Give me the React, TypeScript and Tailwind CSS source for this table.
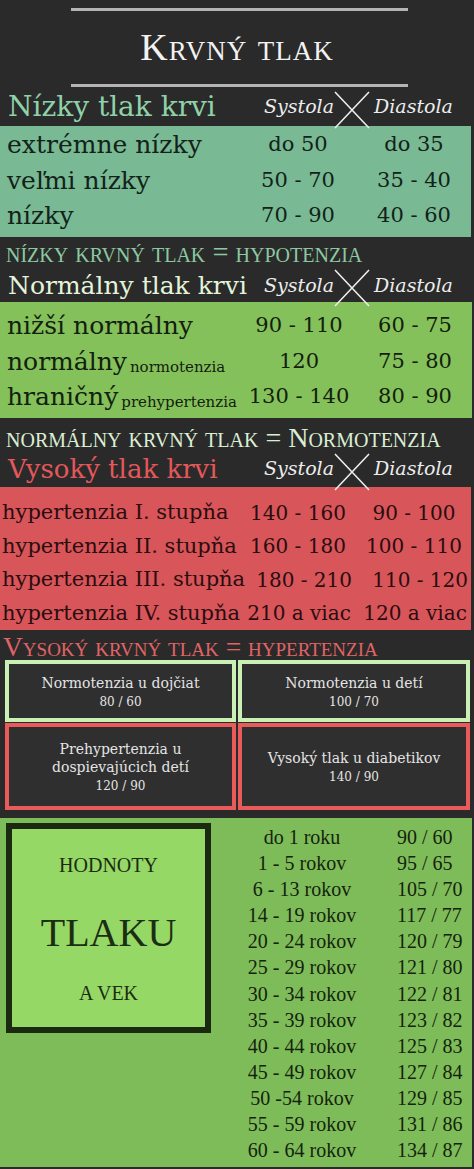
const slab = "font-['DejaVu_Serif',serif]";
const times = "font-['Liberation_Serif',serif]";

function Cross() {
  return (
    <svg width="36" height="38" viewBox="0 0 36 38" className="relative z-10 mt-[6px] shrink-0 overflow-visible">
      <path d="M1 1 L35 37 M35 1 L1 37" stroke="#ededed" strokeWidth="1.6" fill="none" />
    </svg>
  );
}

function Head({ title, tone }: { title: string; tone: string }) {
  return (
    <div className="flex h-full items-center">
      <div className={`w-[262px] whitespace-nowrap pl-[8px] leading-none ${slab} ${tone}`}>{title}</div>
      <div className={`w-[72px] text-right text-[19px] italic leading-none text-[#ececec] ${slab}`}>Systola</div>
      <Cross />
      <div className={`pl-[4px] text-[19px] italic leading-none text-[#ececec] ${slab}`}>Diastola</div>
    </div>
  );
}

type Row = { label: React.ReactNode; a: string; b: string };

const low: Row[] = [
  { label: "extrémne nízky", a: "do 50", b: "do 35" },
  { label: "veľmi nízky", a: "50 - 70", b: "35 - 40" },
  { label: "nízky", a: "70 - 90", b: "40 - 60" },
];

const normal: Row[] = [
  { label: "nižší normálny", a: "90 - 110", b: "60 - 75" },
  {
    label: (
      <>
        normálny<span className="relative top-[2px] ml-[3px] text-[15px]">normotenzia</span>
      </>
    ),
    a: "120",
    b: "75 - 80",
  },
  {
    label: (
      <>
        hraničný<span className="relative top-[2px] ml-[3px] text-[15px]">prehypertenzia</span>
      </>
    ),
    a: "130 - 140",
    b: "80 - 90",
  },
];

const high: Row[] = [
  { label: "hypertenzia I. stupňa", a: "140 - 160", b: "90 - 100" },
  { label: "hypertenzia II. stupňa", a: "160 - 180", b: "100 - 110" },
  { label: "hypertenzia III. stupňa", a: "180 - 210", b: "110 - 120" },
  { label: "hypertenzia IV. stupňa", a: "210 a viac", b: "120 a viac" },
];

const ages = [
  ["do 1 roku", "90 / 60"],
  ["1 - 5 rokov", "95 / 65"],
  ["6 - 13 rokov", "105 / 70"],
  ["14 - 19 rokov", "117 / 77"],
  ["20 - 24 rokov", "120 / 79"],
  ["25 - 29 rokov", "121 / 80"],
  ["30 - 34 rokov", "122 / 81"],
  ["35 - 39 rokov", "123 / 82"],
  ["40 - 44 rokov", "125 / 83"],
  ["45 - 49 rokov", "127 / 84"],
  ["50 -54 rokov", "129 / 85"],
  ["55 - 59 rokov", "131 / 86"],
  ["60 - 64 rokov", "134 / 87"],
];

function Box({ border, h, lines, value }: { border: string; h: string; lines: string[]; value: string }) {
  return (
    <div className={`flex flex-col items-center justify-center border-[4px] bg-[#2f2f2f] text-center text-[#e4e4e4] ${slab} ${border} ${h}`}>
      {lines.map((l) => (
        <div key={l} className="text-[14px] leading-[18px]">
          {l}
        </div>
      ))}
      <div className="mt-[3px] text-[12px] leading-[14px]">{value}</div>
    </div>
  );
}

export default function App() {
  return (
    <div className="h-[1169px] w-[474px] overflow-hidden bg-[#2a2a2a]">
      <div className="pt-[8px]">
        <div className="ml-[71px] h-[3px] w-[337px] bg-[#b4b4b4]" />
        <div
          className={`flex h-[73px] items-center justify-center text-[38px] tracking-[1px] text-[#f2f2f2] [font-variant:small-caps] ${times}`}
        >
          Krvný tlak
        </div>
        <div className="ml-[71px] h-[3px] w-[337px] bg-[#b4b4b4]" />
      </div>

      <div className="h-[39px]">
        <Head title="Nízky tlak krvi" tone="text-[28px] text-[#8fd2a9]" />
      </div>
      <div className={`h-[111px] w-[471px] bg-[#79b994] text-[#132219] ${slab}`}>
        {low.map((r) => (
          <div key={r.a} className="grid h-[35.5px] grid-cols-[1fr_118px_114px] items-center">
            <div className="whitespace-nowrap pl-[7px] text-[25px]">{r.label}</div>
            <div className="text-center text-[21px]">{r.a}</div>
            <div className="text-center text-[21px]">{r.b}</div>
          </div>
        ))}
      </div>

      <div className={`h-[29px] pl-[6px] pt-[4px] text-[28.5px] leading-[23px] text-[#8cc8a1] [font-variant:small-caps] ${times}`}>
        nízky krvný tlak = hypotenzia
      </div>
      <div className="h-[36px] pt-[2px]">
        <Head title="Normálny tlak krvi" tone="text-[25px] text-[#e2f5da]" />
      </div>
      <div className={`h-[116px] w-[472px] bg-[#85c15b] pt-[5px] text-[#13200e] ${slab}`}>
        {normal.map((r) => (
          <div key={r.a} className="grid h-[35.5px] grid-cols-[1fr_118px_114px] items-center">
            <div className="whitespace-nowrap pl-[7px] text-[25px]">{r.label}</div>
            <div className="text-center text-[21px]">{r.a}</div>
            <div className="text-center text-[21px]">{r.b}</div>
          </div>
        ))}
      </div>

      <div className={`h-[32px] pl-[6px] pt-[8px] text-[28px] leading-[23px] text-[#dbeed3] [font-variant:small-caps] ${times}`}>
        normálny krvný tlak = Normotenzia
      </div>
      <div className="h-[37px]">
        <Head title="Vysoký tlak krvi" tone="text-[26px] text-[#e4585b]" />
      </div>
      <div className={`h-[143px] w-[471px] bg-[#d8555a] pt-[9px] text-[#2a0d0f] ${slab}`}>
        {high.map((r) => (
          <div key={r.a} className="grid h-[33.5px] grid-cols-[1fr_118px_114px] items-center">
            <div className="whitespace-nowrap pl-[2px] text-[21px]">{r.label}</div>
            <div className="text-center text-[20px]">{r.a}</div>
            <div className="text-center text-[20px]">{r.b}</div>
          </div>
        ))}
      </div>

      <div className={`h-[30px] pl-[3px] pt-[5px] text-[27.5px] leading-[23px] text-[#e06466] [font-variant:small-caps] ${times}`}>
        Vysoký krvný tlak = hypertenzia
      </div>

      <div className="grid grid-cols-[231px_232px] gap-x-[2px] gap-y-[1px] pl-[5px]">
        <Box border="border-[#c9f1b6]" h="h-[62px]" lines={["Normotenzia u dojčiat"]} value="80 / 60" />
        <Box border="border-[#c9f1b6]" h="h-[62px]" lines={["Normotenzia u detí"]} value="100 / 70" />
        <Box
          border="border-[#e95b5b]"
          h="h-[87px]"
          lines={["Prehypertenzia u", "dospievajúcich detí"]}
          value="120 / 90"
        />
        <Box border="border-[#e95b5b]" h="h-[87px]" lines={["Vysoký tlak u diabetikov"]} value="140 / 90" />
      </div>

      <div className={`mt-[8px] flex h-[349px] w-[472px] bg-[#7ebc5a] ${times}`}>
        <div className="ml-[6px] mt-[5px] flex h-[210px] w-[205px] shrink-0 flex-col items-center border-[6px] border-[#1a2910] bg-[#95d865] text-[#1b2d12]">
          <div className="pt-[26px] text-[20px] leading-[20px]">HODNOTY</div>
          <div className="mt-[38px] text-[40px] leading-[40px]">TLAKU</div>
          <div className="mt-[30px] text-[20px] leading-[20px]">A VEK</div>
        </div>
        <div className="ml-[21px] pt-[6px] text-[20px] text-[#15230d]">
          {ages.map(([age, val]) => (
            <div key={age} className="grid h-[26.08px] grid-cols-[140px_1fr] items-center leading-[26px]">
              <div className="whitespace-nowrap text-center">{age}</div>
              <div className="whitespace-nowrap pl-[25px]">{val}</div>
            </div>
          ))}
        </div>
      </div>
    </div>
  );
}
